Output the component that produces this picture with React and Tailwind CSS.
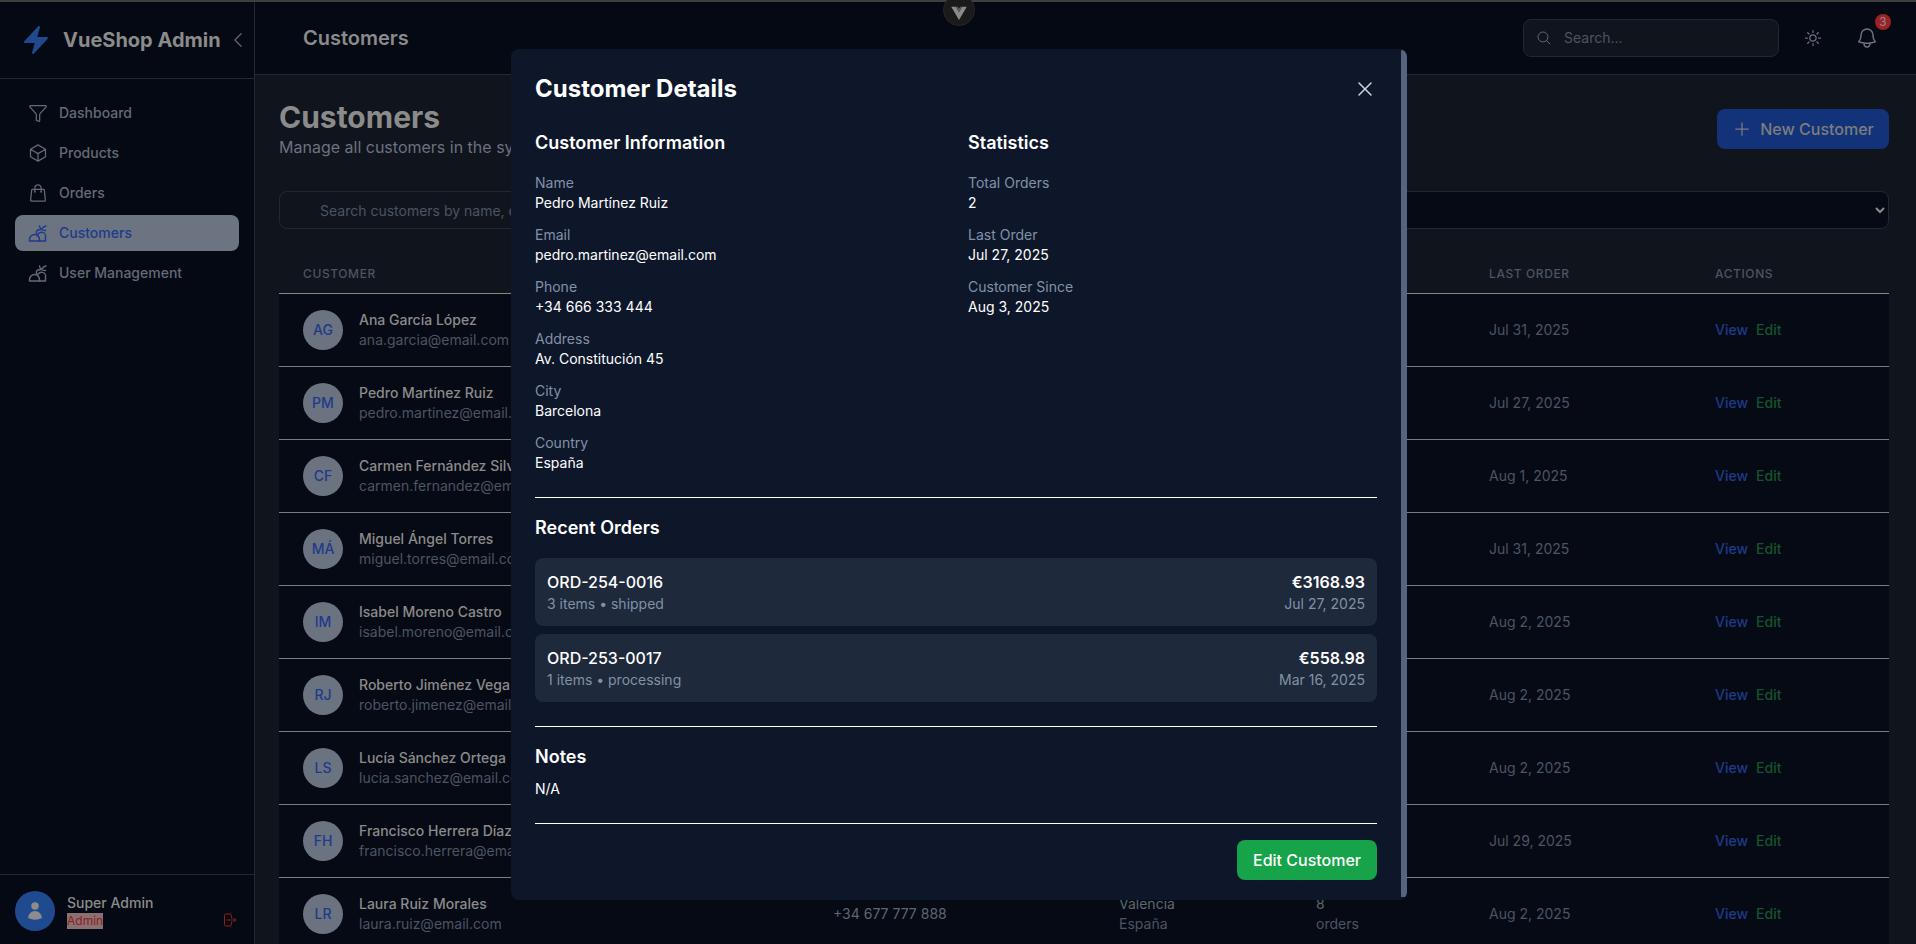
import React from "react";
import {
  HiBolt, HiOutlineCube, HiOutlineShoppingBag, HiOutlineSun, HiOutlineBell,
  HiOutlineMagnifyingGlass, HiXMark, HiPlus, HiUser, HiChevronLeft, HiOutlineArrowRightOnRectangle,
} from "react-icons/hi2";
import { Funnel } from "lucide-react";

const FunnelIcon = ({ className }) => <Funnel className={className} strokeWidth={1.5} />;

const PeopleIcon = ({ className }) => (
  <svg viewBox="0 0 20 20" fill="none" stroke="currentColor" strokeWidth="1.5" strokeLinecap="round" strokeLinejoin="round" className={className}>
    <path d="M1.5 18v-1.5a5 5 0 0 1 10 0V18z" />
    <path d="M9.5 12.3a4 4 0 0 1 8 2.2V18h-6" />
    <path d="M8.5 10.5c-.6-2.6 1-4.2 3.5-3.8 2 .3 3-3.7 6-3.7" />
    <path d="M11.5 3c.4 2.6 2.6 4.6 6 4.5" />
  </svg>
);

const nav = [
  { label: "Dashboard", Icon: FunnelIcon },
  { label: "Products", Icon: HiOutlineCube },
  { label: "Orders", Icon: HiOutlineShoppingBag },
  { label: "Customers", Icon: PeopleIcon, active: true },
  { label: "User Management", Icon: PeopleIcon },
];

const rows = [
  ["AG", "Ana García López", "ana.garcia@email.com", "+34 666 111 222", "Madrid", "12", "Jul 31, 2025"],
  ["PM", "Pedro Martínez Ruiz", "pedro.martinez@email.com", "+34 666 333 444", "Barcelona", "2", "Jul 27, 2025"],
  ["CF", "Carmen Fernández Silva", "carmen.fernandez@email.com", "+34 677 111 222", "Sevilla", "5", "Aug 1, 2025"],
  ["MÁ", "Miguel Ángel Torres", "miguel.torres@email.com", "+34 677 222 333", "Bilbao", "7", "Jul 31, 2025"],
  ["IM", "Isabel Moreno Castro", "isabel.moreno@email.com", "+34 677 333 444", "Málaga", "3", "Aug 2, 2025"],
  ["RJ", "Roberto Jiménez Vega", "roberto.jimenez@email.com", "+34 677 444 555", "Zaragoza", "4", "Aug 2, 2025"],
  ["LS", "Lucía Sánchez Ortega", "lucia.sanchez@email.com", "+34 677 555 666", "Granada", "6", "Aug 2, 2025"],
  ["FH", "Francisco Herrera Díaz", "francisco.herrera@email.com", "+34 677 666 777", "Murcia", "9", "Jul 29, 2025"],
  ["LR", "Laura Ruiz Morales", "laura.ruiz@email.com", "+34 677 777 888", "Valencia", "8", "Aug 2, 2025"],
];

const info = [
  ["Name", "Pedro Martínez Ruiz"],
  ["Email", "pedro.martinez@email.com"],
  ["Phone", "+34 666 333 444"],
  ["Address", "Av. Constitución 45"],
  ["City", "Barcelona"],
  ["Country", "España"],
];
const stats = [
  ["Total Orders", "2"],
  ["Last Order", "Jul 27, 2025"],
  ["Customer Since", "Aug 3, 2025"],
];
const orders = [
  ["ORD-254-0016", "3 items • shipped", "€3168.93", "Jul 27, 2025"],
  ["ORD-253-0017", "1 items • processing", "€558.98", "Mar 16, 2025"],
];

const Field = ({ label, value }) => (
  <div>
    <p className="text-sm leading-5 text-[#8291a8]">{label}</p>
    <p className="text-sm leading-5 text-white">{value}</p>
  </div>
);

function Sidebar() {
  return (
    <aside className="flex w-[255px] shrink-0 flex-col border-r border-[#23272f] bg-[#050913]">
      <div className="flex h-[77px] items-center border-b border-[#23272f] pl-[23px] pr-[6px]">
        <HiBolt className="ml-[-3px] h-8 w-8 shrink-0 text-[#1f4a8f]" />
        <span className="ml-[11px] whitespace-nowrap text-xl font-bold leading-7 text-[#8b8b8b]">VueShop Admin</span>
        <HiChevronLeft className="ml-auto h-5 w-5 text-[#5f6670]" />
      </div>
      <nav className="flex flex-1 flex-col gap-1 px-[15px] pt-4">
        {nav.map(({ label, Icon, active }) => (
          <div key={label} className={`flex h-9 items-center gap-[11px] rounded-lg pl-[13px] text-sm font-medium ${active ? "bg-[#6b7480] text-[#1e3a8a]" : "text-[#626b78]"}`}>
            <Icon className="h-5 w-5 shrink-0" />
            <span>{label}</span>
          </div>
        ))}
      </nav>
      <div className="flex h-[70px] border-t border-[#23272f] pl-[15px] pr-[17px] pt-4">
        <div className="flex h-10 w-10 shrink-0 items-center justify-center rounded-full bg-[#1f4a8f]">
          <HiUser className="h-5 w-5 text-[#8c8c8c]" />
        </div>
        <div className="ml-3 mt-[2px] flex flex-col items-start">
          <span className="text-sm font-medium leading-5 text-[#8b8b8b]">Super Admin</span>
          <span className="bg-[#8a7070] text-xs leading-4 text-[#8f1d1d]">Admin</span>
        </div>
        <HiOutlineArrowRightOnRectangle className="ml-auto mt-[21px] h-4 w-4 text-[#8f1d1d]" />
      </div>
    </aside>
  );
}

function Header() {
  return (
    <header className="flex h-[73px] shrink-0 items-center border-b border-[#23272f] bg-[#050913] pl-12 pr-[37px]">
      <h1 className="mt-[-1px] text-xl font-semibold text-[#8b8b8b]">Customers</h1>
      <div className="ml-auto flex h-[38px] w-64 items-center gap-3 rounded-lg border border-[#23272f] bg-[#10141c] pl-[12px] text-sm text-[#4b5563]">
        <HiOutlineMagnifyingGlass className="h-4 w-4 text-[#5f6670]" />
        <span>Search...</span>
      </div>
      <HiOutlineSun className="ml-[24px] h-5 w-5 text-[#6b7280]" />
      <div className="relative ml-[32px] h-6 w-6">
        <HiOutlineBell className="h-6 w-6 text-[#6b7280]" />
        <span className="absolute right-[-12px] top-[-12px] flex h-4 w-4 items-center justify-center rounded-full bg-[#9b2226] text-xs text-[#8c8c8c]">3</span>
      </div>
    </header>
  );
}

function Table() {
  return (
    <table className="w-full table-fixed border-collapse">
      <colgroup>
        <col className="w-[530px]" />
        <col className="w-[286px]" />
        <col className="w-[197px]" />
        <col className="w-[173px]" />
        <col className="w-[226px]" />
        <col />
      </colgroup>
      <thead>
        <tr className="h-[38px] border-b border-[#868686] text-left text-xs font-medium uppercase tracking-wider text-[#4b5563]">
          <th className="pl-6 font-medium">Customer</th>
          <th className="pl-6 font-medium">Contact</th>
          <th className="pl-6 font-medium">Location</th>
          <th className="pl-6 font-medium">Orders</th>
          <th className="pl-6 font-medium">Last Order</th>
          <th className="pl-6 font-medium">Actions</th>
        </tr>
      </thead>
      <tbody className="bg-[#060a14]">
        {rows.map(([ini, name, email, phone, city, count, date]) => (
          <tr key={ini} className="h-[73px] border-b border-[#7c7c7c] text-sm">
            <td className="pl-6">
              <div className="flex items-center gap-4">
                <div className="flex h-10 w-10 shrink-0 items-center justify-center rounded-full bg-[#6b7280] text-sm font-medium text-[#1e3a8a]">{ini}</div>
                <div>
                  <p className="font-medium leading-5 text-[#8b8b8b]">{name}</p>
                  <p className="leading-5 text-[#4b5563]">{email}</p>
                </div>
              </div>
            </td>
            <td className="pl-6 text-[#5f6670]">{phone}</td>
            <td className="pl-6">
              <p className="leading-5 text-[#5f6670]">{city}</p>
              <p className="leading-5 text-[#4b5563]">España</p>
            </td>
            <td className="pl-6">
              <p className="leading-5 text-[#5f6670]">{count}</p>
              <p className="leading-5 text-[#4b5563]">orders</p>
            </td>
            <td className="pl-6 text-[#4b5563]">{date}</td>
            <td className="pl-6">
              <span className="font-medium text-[#1e3a8a]">View</span>
              <span className="ml-2 font-medium text-[#14532d]">Edit</span>
            </td>
          </tr>
        ))}
      </tbody>
    </table>
  );
}

function Content() {
  return (
    <main className="min-h-0 flex-1 overflow-hidden bg-[#10141c] pl-6 pr-[27px] pt-6">
      <div className="flex items-start justify-between">
        <div>
          <h2 className="text-3xl font-bold leading-9 text-[#8b8b8b]">Customers</h2>
          <p className="text-base leading-6 text-[#6b7280]">Manage all customers in the system</p>
        </div>
        <button className="mt-[10px] flex h-10 w-[172px] items-center justify-center gap-2 rounded-lg bg-[#12327a] text-base font-medium text-[#7d7d7d]">
          <HiPlus className="h-5 w-5" />
          New Customer
        </button>
      </div>
      <div className="mt-8 mb-[26px] flex gap-4">
        <input
          readOnly
          placeholder="Search customers by name, email or phone..."
          className="h-[38px] flex-1 rounded-lg border border-[#23272f] bg-[#10141c] pl-10 text-sm text-[#5f6670] placeholder:text-[#4b5563] outline-none"
        />
        <select className="h-[38px] w-[780px] rounded-lg border border-[#23272f] bg-[#060a14] px-3 text-sm text-[#8b8b8b] outline-none">
          <option>All cities</option>
        </select>
      </div>
      <Table />
    </main>
  );
}

function Modal() {
  return (
    <div className="absolute left-[511px] top-[49px] flex h-[851px] w-[896px] overflow-hidden rounded-lg bg-[#0e172a] text-white">
      <div className="min-w-0 flex-1 px-6 pt-6">
        <div className="flex h-8 items-center justify-between">
          <h2 className="text-2xl font-bold">Customer Details</h2>
          <HiXMark className="h-6 w-6 text-[#cbd5e1]" />
        </div>
        <div className="mt-6 grid grid-cols-2 gap-6 border-b border-white pb-6">
          <div>
            <h3 className="mb-4 text-lg font-semibold leading-7">Customer Information</h3>
            <div className="flex flex-col gap-3">
              {info.map(([l, v]) => <Field key={l} label={l} value={v} />)}
            </div>
          </div>
          <div>
            <h3 className="mb-4 text-lg font-semibold leading-7">Statistics</h3>
            <div className="flex flex-col gap-3">
              {stats.map(([l, v]) => <Field key={l} label={l} value={v} />)}
            </div>
          </div>
        </div>
        <div className="border-b border-white pb-6 pt-4">
          <h3 className="mb-4 text-lg font-semibold leading-7">Recent Orders</h3>
          <div className="flex flex-col gap-2">
            {orders.map(([id, sub, amt, date]) => (
              <div key={id} className="flex justify-between rounded-lg bg-[#1e293b] p-3">
                <div>
                  <p className="text-base font-medium leading-6">{id}</p>
                  <p className="text-sm leading-5 text-[#8291a8]">{sub}</p>
                </div>
                <div className="text-right">
                  <p className="text-base font-semibold leading-6">{amt}</p>
                  <p className="text-sm leading-5 text-[#8291a8]">{date}</p>
                </div>
              </div>
            ))}
          </div>
        </div>
        <div className="border-b border-white pb-6 pt-4">
          <h3 className="mb-2 text-lg font-semibold leading-7">Notes</h3>
          <p className="text-sm leading-5">N/A</p>
        </div>
        <div className="flex justify-end pt-4">
          <button className="h-10 rounded-lg bg-[#16a34a] px-4 text-base font-medium text-white">Edit Customer</button>
        </div>
      </div>
      <div className="mb-[3px] w-[6px] shrink-0 self-stretch rounded-t-sm bg-[#55657f]" />
    </div>
  );
}

function VueTab() {
  return (
    <div className="absolute left-[943px] top-[-6px] flex h-8 w-8 items-center justify-center rounded-full border border-[#262626] bg-[#1a1a1a] pt-[6px]">
      <svg viewBox="0 0 20 18" className="h-[14px] w-4">
        <polygon points="0,1 6,1 10,8 14,1 20,1 10,18" fill="#8a8a8a" />
        <polygon points="6,1 10,8 14,1 11.5,1 10,3.5 8.5,1" fill="#5c5c5c" />
      </svg>
    </div>
  );
}

export default function App() {
  return (
    <div className="relative flex h-screen w-full flex-col overflow-hidden bg-[#050913] font-['Inter',sans-serif]">
      <div className="h-[2px] shrink-0 bg-[#3f3f3f]" />
      <div className="flex min-h-0 flex-1">
        <Sidebar />
        <div className="flex min-w-0 flex-1 flex-col">
          <Header />
          <Content />
        </div>
      </div>
      <VueTab />
      <Modal />
    </div>
  );
}
